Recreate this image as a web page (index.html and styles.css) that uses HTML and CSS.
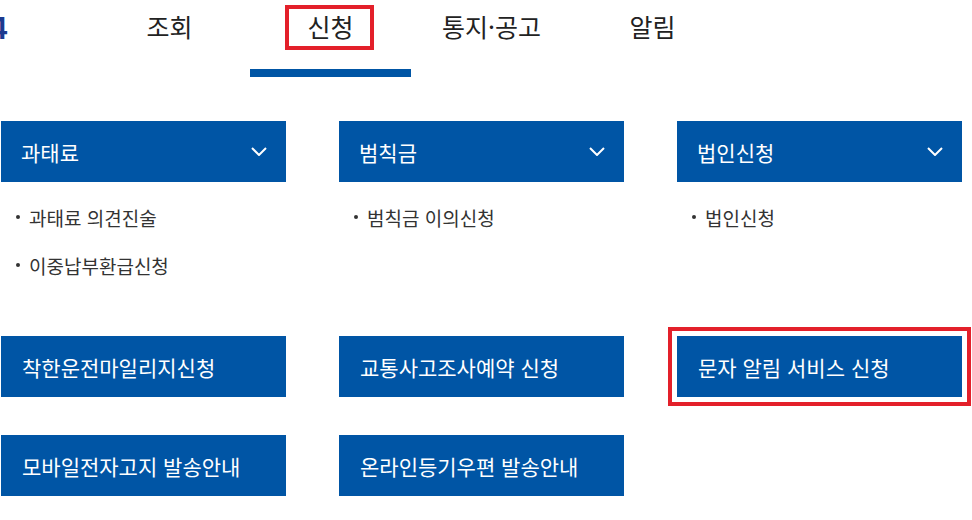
FILE: index.html
```html
<!DOCTYPE html>
<html lang="ko">
<head>
<meta charset="utf-8">
<link rel="stylesheet" href="styles.css">
</head>
<body>
<header class="top">
  <div class="logo"><span class="logo-text">4</span></div>
  <nav class="gnb">
    <a class="tab">조회</a>
    <a class="tab active"><span class="hl">신청</span></a>
    <a class="tab">통지·공고</a>
    <a class="tab">알림</a>
  </nav>
</header>
<main class="content">
  <section class="drops">
    <div class="drop">
      <div class="drop-head"><span>과태료</span>
        <svg class="chev" viewBox="0 0 16 9" width="16" height="9"><path d="M1 1l7 7 7-7" fill="none" stroke="#fff" stroke-width="2"/></svg>
      </div>
      <ul class="sub">
        <li>과태료 의견진술</li>
        <li>이중납부환급신청</li>
      </ul>
    </div>
    <div class="drop">
      <div class="drop-head"><span>범칙금</span>
        <svg class="chev" viewBox="0 0 16 9" width="16" height="9"><path d="M1 1l7 7 7-7" fill="none" stroke="#fff" stroke-width="2"/></svg>
      </div>
      <ul class="sub">
        <li>범칙금 이의신청</li>
      </ul>
    </div>
    <div class="drop">
      <div class="drop-head"><span>법인신청</span>
        <svg class="chev" viewBox="0 0 16 9" width="16" height="9"><path d="M1 1l7 7 7-7" fill="none" stroke="#fff" stroke-width="2"/></svg>
      </div>
      <ul class="sub">
        <li>법인신청</li>
      </ul>
    </div>
  </section>
  <section class="btns">
    <a class="btn">착한운전마일리지신청</a>
    <a class="btn">교통사고조사예약 신청</a>
    <a class="btn marked">문자 알림 서비스 신청</a>
    <a class="btn">모바일전자고지 발송안내</a>
    <a class="btn">온라인등기우편 발송안내</a>
  </section>
</main>
</body>
</html>
```
FILE: styles.css
```css
html, body {
  margin: 0;
  padding: 0;
  background: #fff;
  font-family: "Noto Sans CJK KR", "Noto Sans", sans-serif;
  color: #222;
  width: 972px;
  height: 520px;
  overflow: hidden;
}

.top {
  display: flex;
  height: 77px;
}

.logo {
  width: 89px;
  overflow: hidden;
}

.logo-text {
  display: block;
  margin-left: -10px;
  margin-top: 12px;
  font-family: "Liberation Sans", sans-serif;
  font-weight: 700;
  font-size: 31px;
  line-height: 34px;
  color: #1d3a8f;
}

.gnb {
  display: flex;
}

.tab {
  position: relative;
  display: block;
  width: 161px;
  box-sizing: border-box;
  text-align: center;
  font-size: 25px;
  line-height: 52px;
  color: #222;
  border-bottom: 8px solid transparent;
  height: 77px;
}

.tab.active {
  border-bottom-color: #0055a5;
}

.hl {
  position: relative;
}

.hl::after {
  content: "";
  position: absolute;
  left: -22px;
  right: -20px;
  top: -3px;
  bottom: -6px;
  border: 4px solid #e3202a;
}

.content {
  padding-left: 1px;
}

.drops {
  display: grid;
  grid-template-columns: repeat(3, 285px);
  column-gap: 53px;
  margin-top: 44px;
}

.drop-head {
  display: flex;
  align-items: center;
  justify-content: space-between;
  height: 61px;
  padding: 0 19px 0 20px;
  background: #0055a5;
  color: #fff;
  font-size: 21px;
}

.chev {
  display: block;
}

.sub {
  list-style: none;
  margin: 0;
  padding: 11px 0 0;
}

.sub li {
  display: flex;
  align-items: center;
  height: 48px;
  font-size: 19px;
  color: #333;
}

.sub li::before {
  content: "";
  width: 4px;
  height: 4px;
  border-radius: 50%;
  background: #333;
  margin: 0 9px 0 15px;
}

.btns {
  display: grid;
  grid-template-columns: repeat(3, 285px);
  column-gap: 53px;
  row-gap: 38px;
  margin-top: 47px;
}

.btn {
  position: relative;
  display: flex;
  align-items: center;
  height: 61px;
  padding-left: 21px;
  background: #0055a5;
  color: #fff;
  font-size: 21px;
}

.btn.marked {
  outline: 4px solid #e3202a;
  outline-offset: 5px;
}
```
